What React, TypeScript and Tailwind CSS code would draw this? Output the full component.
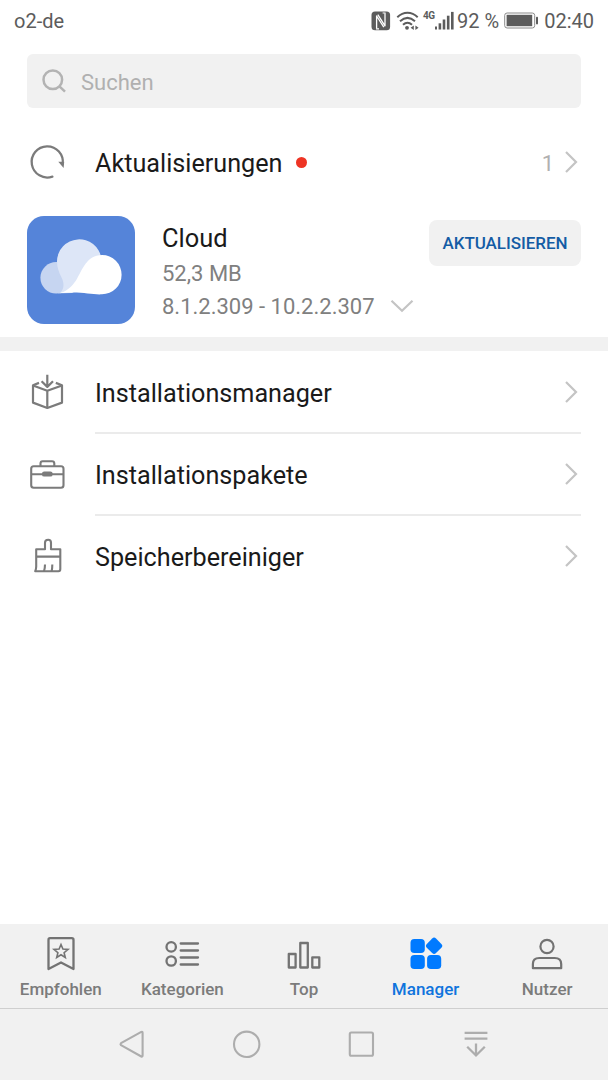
import type { ReactNode } from "react";

function NfcIcon() {
  return (
    <svg className="h-5 w-5 shrink-0" viewBox="0 0 20 20" fill="none">
      <rect x="0.500" y="0.500" width="18.600" height="18.800" rx="3.500" fill="#5c5c5c" />
      <path d="M5.600 17.500V5L12.800 16.200M14 2.300V14.800L6.800 3.600" stroke="#fff" strokeWidth="1.300" strokeLinejoin="round" />
      <path d="M5 17.800h3M11.600 2h3" stroke="#fff" strokeWidth="1.200" />
    </svg>
  );
}

function WifiIcon() {
  return (
    <svg className="h-5 w-6 shrink-0" viewBox="0 0 24 20" fill="none" stroke="#5c5c5c" strokeWidth="2">
      <path d="M1.300 6.200C7.500 .3 15.500 .3 21.700 6.200" />
      <path d="M4 10.200C8.700 6 14.300 6 19 10.200" />
      <path d="M7 13.800C9.800 11.200 13.200 11.200 16 13.800" />
      <circle cx="11" cy="16.800" r="1.900" fill="#5c5c5c" stroke="none" />
      <path d="M17.800 14.500v4.600l-3.200-2.300zM19.400 14.500v4.600l3.200-2.300z" fill="#5c5c5c" stroke="none" />
    </svg>
  );
}

function SignalIcon() {
  return (
    <svg className="h-5 w-5 shrink-0" viewBox="0 0 20 20" fill="#5c5c5c">
      <rect x="-.6" y="15.500" width="2.600" height="3" />
      <rect x="3.600" y="12.300" width="2.600" height="6.200" />
      <rect x="7.700" y="8.500" width="2.600" height="10" />
      <rect x="11.900" y="4.700" width="2.600" height="13.800" />
      <rect x="16" y="0.900" width="2.600" height="17.600" />
    </svg>
  );
}

function BatteryIcon() {
  return (
    <svg className="h-5 w-[35px] shrink-0" viewBox="0 0 35 20" fill="none">
      <rect x="0.700" y="2" width="30" height="15" rx="2.400" stroke="#8a8a8a" strokeWidth="1" />
      <rect x="2.600" y="3.800" width="25.600" height="11.400" fill="#5c5c5c" />
      <rect x="32" y="5.800" width="2" height="7.600" rx=".8" fill="#5c5c5c" />
    </svg>
  );
}

function SearchIcon() {
  return (
    <svg className="h-6 w-6 shrink-0" viewBox="0 0 24 24" fill="none" stroke="#b3b3b3" strokeWidth="2.500">
      <circle cx="10.800" cy="10.700" r="9.300" />
      <path d="M17.400 17.400l5.600 5.200" />
    </svg>
  );
}

function RefreshIcon() {
  return (
    <svg className="h-10 w-10 shrink-0" viewBox="0 0 40 40">
      <path d="M25.400 34.600A15.600 15.600 0 1 1 35.700 22" fill="none" stroke="#7b7b7b" strokeWidth="2.300" strokeLinecap="round" />
      <path d="M31.300 19.700h5.900l-.6 6.200z" fill="#7b7b7b" />
    </svg>
  );
}

function CloudIcon() {
  return (
    <svg className="size-27 shrink-0" viewBox="0 0 108 108">
      <rect width="108" height="108" rx="17" fill="#5584d9" />
      <circle cx="29.200" cy="61.800" r="15.800" fill="#c6d5f1" />
      <path
        d="M33 77.300C37.500 73 37 67 35 62.500C31.500 56 30 51 30 45.300A22.300 22.300 0 0 1 74.300 42L76 60L45 77z"
        fill="#dde6f7"
      />
      <path
        d="M30.500 77.600C40 76 45 70 49 64.500C55.500 54 59.500 39.100 75 39.100A19.600 19.600 0 0 1 75 78.300C64 79 52 74.500 30.500 77.600z"
        fill="#fff"
      />
    </svg>
  );
}

function Chevron() {
  return (
    <svg className="h-6 w-[14px] shrink-0" viewBox="0 0 14 24" fill="none" stroke="#c4c4c4" strokeWidth="2.200">
      <path d="M1 2L11 12L1 22" />
    </svg>
  );
}

function BoxIcon() {
  return (
    <svg className="h-10 w-10 shrink-0" viewBox="0 0 40 40" fill="none" stroke="#7b7b7b" strokeWidth="2.200" strokeLinejoin="round">
      <path d="M20.300 2.700V15M14.600 9.200L20.300 14.900L26 9.200" />
      <path d="M12 10.900L6 13.200V30.600L20.300 36L35 30.600V13.200L28.800 10.900" />
      <path d="M6 13.500L20.300 18.800L35 13.500M20.300 18.800V36" />
    </svg>
  );
}

function CaseIcon() {
  return (
    <svg className="h-10 w-10 shrink-0" viewBox="0 0 40 40" fill="none" stroke="#7b7b7b" strokeWidth="2.100">
      <rect x="4.200" y="12.200" width="32.300" height="21.500" rx="2.500" />
      <path d="M13.500 12V9.500Q13.500 7.200 15.600 7.200H25Q27.300 7.200 27.300 9.500V12M4 20.200H36.500" />
      <rect x="15" y="17.400" width="10.600" height="5.200" rx="2.200" fill="#7b7b7b" stroke="none" />
    </svg>
  );
}

function BrushIcon() {
  return (
    <svg className="h-10 w-10 shrink-0" viewBox="0 0 40 40" fill="none" stroke="#7b7b7b" strokeWidth="2.100" strokeLinejoin="round">
      <path d="M9.200 13.300H18V6.700Q18 3.700 21.200 3.700Q24 3.700 24 6.700V13.300H33.300V33Q33.300 35.200 31.500 35.200H8.200Q9.200 33 9.200 30.500V13.300zM9.200 20.600H33.300" />
      <path d="M17 35.200Q18 32 18 28.500M24.700 35.200Q25.300 32 25.300 28.500" />
    </svg>
  );
}

function BookmarkIcon() {
  return (
    <svg className="h-9 w-9" viewBox="0 0 36 36" fill="none" stroke="#737373" strokeWidth="2.300" strokeLinejoin="round">
      <path d="M7 2.200H28.800Q30.500 2.200 30.500 3.900V33L18 26.500L5.500 33V3.900Q5.500 2.200 7 2.200z" />
      <path
        d="M18 8.500L19.900 13.100L25 13.400L21.100 16.700L22.300 21.500L18 18.800L13.700 21.500L14.900 16.700L11 13.400L16.100 13.100z"
        strokeWidth="1.600"
        strokeLinejoin="miter"
      />
    </svg>
  );
}

function ListIcon() {
  return (
    <svg className="h-9 w-9" viewBox="0 0 36 36" fill="none" stroke="#737373" strokeWidth="2.300" strokeLinecap="round">
      <circle cx="7.200" cy="10.900" r="4.700" />
      <circle cx="7.200" cy="25" r="4.700" />
      <path d="M16.700 7.500H34M16.700 14.500H34M16.700 21.500H34M16.700 28.500H34" />
    </svg>
  );
}

function BarsIcon() {
  return (
    <svg className="h-9 w-9" viewBox="0 0 36 36" fill="none" stroke="#737373" strokeWidth="2.300" strokeLinejoin="round">
      <rect x="2.800" y="18" width="6.800" height="13.500" />
      <rect x="14.300" y="7" width="7.500" height="24.500" />
      <rect x="26.300" y="21.300" width="7" height="10.200" />
    </svg>
  );
}

function ManagerIcon() {
  return (
    <svg className="h-9 w-9" viewBox="0 0 36 36" fill="#007aff">
      <rect x="2.500" y="3" width="14.300" height="14" rx="3.800" />
      <rect x="2.500" y="19" width="14.300" height="14" rx="3.800" />
      <rect x="19.100" y="19" width="14.100" height="14" rx="3.800" />
      <rect x="19.600" y="3.300" width="13" height="13" rx="2.700" transform="rotate(45 26.100 9.800)" />
    </svg>
  );
}

function UserIcon() {
  return (
    <svg className="h-9 w-9" viewBox="0 0 36 36" fill="none" stroke="#737373" strokeWidth="2.200" strokeLinejoin="round">
      <circle cx="18" cy="10.500" r="6.600" />
      <path d="M3.900 32.200V28Q3.900 22 10.200 22H25.700Q32.200 22 32.200 28V32.200z" />
    </svg>
  );
}

function MenuRow({ icon, label, divider = true }: { icon: ReactNode; label: string; divider?: boolean }) {
  return (
    <li className="flex h-[82px] pr-[27px] pl-[27px]">
      <div className="flex w-[68px] items-center pb-0.5">{icon}</div>
      <div className={divider ? "flex flex-1 items-center justify-between border-b-2 border-[#ebebeb] pr-[2px]" : "flex flex-1 items-center justify-between border-b-2 border-white pr-[2px]"}>
        <span className="pt-1 text-[25.200px] leading-none text-[#1a1a1a]">{label}</span>
        <Chevron />
      </div>
    </li>
  );
}

function Tab({ icon, label, active = false }: { icon: ReactNode; label: string; active?: boolean }) {
  return (
    <button className={active ? "flex flex-1 flex-col items-center pt-3 text-[#0f74dd]" : "flex flex-1 flex-col items-center pt-3 text-[#7b7b7b]"}>
      {icon}
      <span className="mt-[7px] text-[17px] leading-5 font-medium">{label}</span>
    </button>
  );
}

export default function App() {
  return (
    <div className="flex h-[1080px] w-[608px] flex-col bg-white font-[Roboto,sans-serif]">
      <header className="flex h-[42px] shrink-0 items-center justify-between pr-[14px] pl-[14px] text-[20px] text-[#5c5c5c]">
        <span>o2-de</span>
        <div className="flex items-center">
          <NfcIcon />
          <div className="w-[5px]" />
          <WifiIcon />
          <span className="ml-[3px] w-[12px] self-start pt-[1px] text-[10px] leading-[18px] font-bold tracking-[-0.5px]">4G</span>
          <SignalIcon />
          <span className="mr-[5px] ml-[2px]">92 %</span>
          <BatteryIcon />
          <span className="ml-[5px]">02:40</span>
        </div>
      </header>

      <div className="mx-[27px] mt-3 flex h-[54px] shrink-0 items-center gap-[15px] rounded-[6px] bg-[#f1f1f1] pl-[15px]">
        <SearchIcon />
        <span className="pt-0.5 text-[22px] text-[#b0b0b0]">Suchen</span>
      </div>

      <section className="flex h-[108px] shrink-0 items-center pr-[29px] pl-[27px]">
        <div className="w-[68px]">
          <RefreshIcon />
        </div>
        <span className="pt-1 text-[25.200px] text-[#1a1a1a]">Aktualisierungen</span>
        <span className="ml-[13px] size-[11px] rounded-full bg-[#ee3424]" />
        <span className="mr-[11px] ml-auto pt-0.5 text-[22px] text-[#b0b0b0]">1</span>
        <Chevron />
      </section>

      <section className="flex h-[121px] shrink-0 items-start px-[27px]">
        <CloudIcon />
        <div className="ml-[27px] flex flex-col pt-[5px]">
          <span className="text-[25.400px] leading-[35px] text-[#1a1a1a]">Cloud</span>
          <span className="text-[22px] leading-9 text-[#808080]">52,3 MB</span>
          <span className="flex items-center text-[22px] leading-[30px] text-[#808080]">
            8.1.2.309 - 10.2.2.307
            <svg className="ml-[15px] h-[14px] w-6" viewBox="0 0 24 14" fill="none" stroke="#c4c4c4" strokeWidth="2.200">
              <path d="M1.500 .8L12 10.800L22.500 .8" />
            </svg>
          </span>
        </div>
        <button className="mt-1 ml-auto h-[46px] w-[152px] shrink-0 rounded-[8px] bg-[#f1f1f1] pt-0.5 text-[17px] font-medium tracking-[-0.05px] text-[#145ca5]">
          AKTUALISIEREN
        </button>
      </section>

      <div className="h-[14px] shrink-0 bg-[#f1f1f1]" />

      <ul className="flex-1 pt-px">
        <MenuRow icon={<BoxIcon />} label="Installationsmanager" />
        <MenuRow icon={<CaseIcon />} label="Installationspakete" />
        <MenuRow icon={<BrushIcon />} label="Speicherbereiniger" divider={false} />
      </ul>

      <nav className="flex h-[85px] shrink-0 border-b border-[#cfcfcf] bg-[#f1f1f1]">
        <Tab icon={<BookmarkIcon />} label="Empfohlen" />
        <Tab icon={<ListIcon />} label="Kategorien" />
        <Tab icon={<BarsIcon />} label="Top" />
        <Tab icon={<ManagerIcon />} label="Manager" active />
        <Tab icon={<UserIcon />} label="Nutzer" />
      </nav>

      <div className="flex h-[71px] shrink-0 items-center justify-between bg-[#f1f1f1] pr-[116px] pl-[116px]">
        <svg className="size-8" viewBox="0 0 32 32" fill="none" stroke="#adadad" strokeWidth="2.100" strokeLinejoin="round">
          <path d="M5 14.200L25.300 2.900Q26.600 2.400 26.600 3.900V26.500Q26.600 28 25.300 27.500L5 16.200Q4 15.200 5 14.200z" />
        </svg>
        <svg className="size-8" viewBox="0 0 32 32" fill="none" stroke="#adadad" strokeWidth="2.100">
          <circle cx="15.700" cy="15.300" r="12.700" />
        </svg>
        <svg className="size-8" viewBox="0 0 32 32" fill="none" stroke="#adadad" strokeWidth="2.100">
          <rect x="4.800" y="3.500" width="23.200" height="23.200" rx="1.500" />
        </svg>
        <svg className="size-8" viewBox="0 0 32 32" fill="none" stroke="#adadad" strokeWidth="2.300">
          <path d="M4.600 3.800H27.400M4.600 9.600H27.400M16 14.400V26.500M7.200 17.800L16 26.500L24.800 17.800" />
        </svg>
      </div>
    </div>
  );
}
